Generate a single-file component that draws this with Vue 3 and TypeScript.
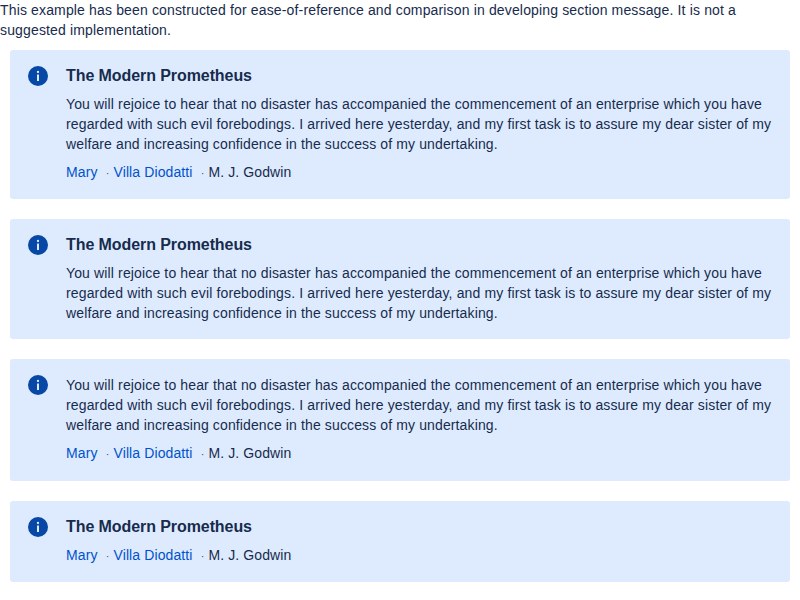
<script setup lang="ts">
interface Message {
  title?: string
  body?: boolean
  actions?: boolean
}

const messages: Message[] = [
  { title: 'The Modern Prometheus', body: true, actions: true },
  { title: 'The Modern Prometheus', body: true },
  { body: true, actions: true },
  { title: 'The Modern Prometheus', actions: true },
]
</script>

<template>
  <main class="page">
    <p class="note">This example has been constructed for ease-of-reference and comparison in developing section message. It is not a suggested implementation.</p>
    <div class="messages">
      <section v-for="(message, i) in messages" :key="i" class="message" :class="{ 'no-title': !message.title, 'has-actions': message.actions }">
        <div class="icon">
          <svg width="24" height="24" viewBox="0 0 24 24" aria-hidden="true">
            <circle cx="12" cy="12" r="10" fill="#0747a6" />
            <rect x="11" y="10.5" width="2" height="6.5" rx="0.3" fill="#deebff" />
            <circle cx="12" cy="8" r="1.15" fill="#deebff" />
          </svg>
        </div>
        <div class="content">
          <h1 v-if="message.title" class="title">{{ message.title }}</h1>
          <p v-if="message.body" class="body">You will rejoice to hear that no disaster has accompanied the commencement of an enterprise which you have <span class="second-line">regarded with such evil forebodings. I arrived here yesterday, and my first task is to assure my dear sister of my</span> <span class="last-line">welfare and increasing confidence in the success of my undertaking.</span></p>
          <ul v-if="message.actions" class="actions">
            <li><a>Mary</a></li>
            <li><a>Villa Diodatti</a></li>
            <li>M. J. Godwin</li>
          </ul>
        </div>
      </section>
    </div>
  </main>
</template>

<style scoped>
.page {
  color: #172b4d;
  font: 14px/20px "Liberation Sans", Arial, sans-serif;
  letter-spacing: 0.14px;
}
.note {
  margin: 0;
  letter-spacing: 0.15px;
}
.messages {
  display: flex;
  flex-direction: column;
  gap: 20px;
  padding: 10px;
}
.message {
  display: flex;
  padding: 16px;
  border-radius: 3px;
  background: #deebff;
}
.has-actions {
  padding-bottom: 17px;
}
.no-title.has-actions {
  padding-bottom: 18px;
}
.icon {
  flex: 0 0 40px;
  height: 20px;
  margin-top: -2px;
}
.icon svg {
  display: block;
}
.content {
  flex: 1;
  min-width: 0;
}
.title {
  margin: 0 0 8px;
  font-size: 16px;
  line-height: 20px;
  font-weight: 600;
  letter-spacing: -0.08px;
}
.body {
  margin: 0;
}
.last-line {
  letter-spacing: 0.125px;
}
.actions {
  display: flex;
  margin: 8px 0 0;
  padding: 0;
  list-style: none;
  letter-spacing: 0.1px;
}
.title + .actions {
  margin-top: 0;
}
.actions a {
  color: #0052cc;
}
.actions li {
  display: flex;
  height: 20px;
}
.actions li + li::before {
  content: "·";
  box-sizing: border-box;
  width: 16px;
  padding-right: 4px;
  font-size: 11px;
  line-height: 22px;
  text-align: right;
  color: #42526e;
}
</style>
